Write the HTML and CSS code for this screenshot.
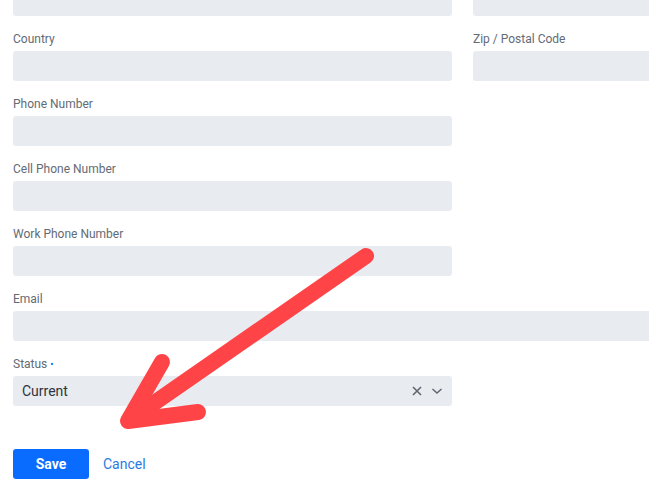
FILE: index.html
```html
<!DOCTYPE html>
<html lang="en">
<head>
  <meta charset="UTF-8" />
  <title>Edit Contact</title>
  <link rel="stylesheet" href="styles.css">
</head>
<body>
  <form class="form">
    <div class="grid">
      <div class="field field-clipped"><input type="text" class="input" /></div>
      <div class="field field-clipped"><input type="text" class="input" /></div>

      <div class="field">
        <label class="label">Country</label>
        <input type="text" class="input" />
      </div>
      <div class="field">
        <label class="label">Zip / Postal Code</label>
        <input type="text" class="input" />
      </div>

      <div class="field">
        <label class="label">Phone Number</label>
        <input type="text" class="input" />
      </div>
      <div></div>

      <div class="field">
        <label class="label">Cell Phone Number</label>
        <input type="text" class="input" />
      </div>
      <div></div>

      <div class="field">
        <label class="label">Work Phone Number</label>
        <input type="text" class="input" />
      </div>
      <div></div>

      <div class="field field-wide">
        <label class="label">Email</label>
        <input type="text" class="input" />
      </div>

      <div class="field">
        <label class="label">Status <span class="required">•</span></label>
        <div class="select">
          <span class="select-value">Current</span>
          <span class="select-icons">
            <svg width="12" height="12" viewBox="0 0 12 12"><path d="M2 2 L10 10 M10 2 L2 10" stroke="#5f6670" stroke-width="1.6" fill="none"/></svg>
            <svg width="12" height="12" viewBox="0 0 12 12"><path d="M1.5 4 L6 8 L10.5 4" stroke="#5f6670" stroke-width="1.5" fill="none"/></svg>
          </span>
        </div>
      </div>
      <div></div>
    </div>

    <div class="actions">
      <button type="button" class="btn-save">Save</button>
      <a href="#" class="btn-cancel">Cancel</a>
    </div>
  </form>

  <svg class="arrow" width="649" height="493" viewBox="0 0 649 493">
    <g stroke="#ff4447" stroke-width="16" stroke-linecap="round" stroke-linejoin="round" fill="none">
      <line x1="366" y1="256" x2="134" y2="417" />
      <path d="M162 362 L128 421 L198 412" />
    </g>
  </svg>
</body>
</html>
```

FILE: styles.css
```css
body {
  font-family: Roboto, "Liberation Sans", Arial, sans-serif;
  margin: 0;
  background: #fff;
  color: #333;
  overflow: hidden;
  position: relative;
  width: 649px;
  height: 493px;
}

.form {
  padding-left: 13px;
  margin-top: -14px;
  width: 920px;
}

.grid {
  display: grid;
  grid-template-columns: 439px 439px;
  column-gap: 21px;
  row-gap: 15px;
}

.field {
  display: flex;
  flex-direction: column;
  gap: 4px;
}

.field-wide {
  grid-column: 1 / 3;
}

.label {
  display: block;
  height: 16px;
  font-size: 12px;
  line-height: 16px;
  color: #646b75;
}

.required {
  color: #1a6fe8;
  font-size: 10px;
  line-height: 10px;
}

.input {
  height: 30px;
  box-sizing: border-box;
  border: none;
  border-radius: 3px;
  background: #e8ebf0;
  margin: 0;
  width: 100%;
}

.select {
  height: 30px;
  box-sizing: border-box;
  border-radius: 3px;
  background: #e8ebf0;
  display: flex;
  align-items: center;
  justify-content: space-between;
  padding: 0 9px 0 9px;
}

.select-value {
  font-size: 14px;
  color: #2e3440;
}

.select-icons {
  display: flex;
  gap: 8px;
  align-items: center;
}

.actions {
  display: flex;
  align-items: center;
  gap: 14px;
  margin-top: 43px;
}

.btn-save {
  width: 76px;
  height: 30px;
  border: none;
  border-radius: 3px;
  background: #0a6cff;
  color: #fff;
  font-family: Roboto, "Liberation Sans", Arial, sans-serif;
  font-weight: bold;
  font-size: 14px;
  cursor: pointer;
}

.btn-cancel {
  color: #2b7be0;
  font-size: 14px;
  text-decoration: none;
}

.arrow {
  position: absolute;
  left: 0;
  top: 0;
  pointer-events: none;
}
```
